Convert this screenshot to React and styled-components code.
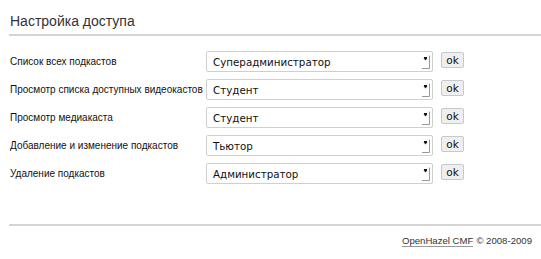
import React from "react";
import styled, { createGlobalStyle } from "styled-components";

const GlobalStyle = createGlobalStyle`
  html, body {
    margin: 0;
    padding: 0;
    background: #fff;
  }
  body {
    font-family: "Liberation Sans", Arial, sans-serif;
    color: #222;
  }
`;

const Page = styled.div`
  width: 541px;
  height: 259px;
  padding-left: 9px;
  box-sizing: border-box;
  overflow: hidden;
`;

const Title = styled.h1`
  margin: 0;
  padding: 12px 0 0 1px;
  height: 22px;
  font-size: 14px;
  font-weight: normal;
  line-height: 18px;
  color: #333;
  border-bottom: 2px solid #d4d4d4;
`;

const Form = styled.div`
  display: grid;
  grid-template-columns: 192px 227px 23px;
  grid-auto-rows: 28px;
  column-gap: 4px;
  padding: 15px 0 0 1px;
  height: 188px;
  box-sizing: border-box;
  align-content: start;
`;

const Label = styled.div`
  font-size: 10px;
  color: #111;
  line-height: 21px;
  white-space: nowrap;
`;

const SelectBox = styled.div`
  display: flex;
  align-items: center;
  height: 21px;
  box-sizing: border-box;
  border: 1px solid #cfcfcf;
  border-radius: 2px;
  padding: 0 2px 0 6px;
  font-family: "DejaVu Sans", sans-serif;
  font-size: 10.3px;
  color: #111;
`;

const SelectText = styled.span`
  flex: 1;
`;

const OkButton = styled.button`
  align-self: start;
  margin: 1px 0 0 4px;
  width: 23px;
  height: 16px;
  padding: 0;
  border: 1px solid #c8c8c8;
  border-radius: 2px;
  background: #efefef;
  font-family: "DejaVu Sans", sans-serif;
  font-size: 10.5px;
  line-height: 13px;
  color: #111;
`;

const Footer = styled.div`
  border-top: 2px solid #d4d4d4;
  display: flex;
  justify-content: flex-end;
  padding: 9px 9px 0 0;
  font-size: 9.6px;
  color: #333;
`;

const FooterLink = styled.a`
  color: #333;
  text-decoration: none;
  border-bottom: 1px solid #999;
  margin-right: 3px;
`;

const Arrow = () => (
  <svg width="9" height="14" viewBox="0 0 9 14">
    <path d="M8.5 0.5 V13.5 H1" stroke="#999" fill="none" />
    <path d="M2.5 3 H6.5 L4.5 5.5 Z" fill="#111" />
    <rect x="3" y="2" width="3" height="1" fill="#111" />
  </svg>
);

const rows = [
  ["Список всех подкастов", "Суперадминистратор"],
  ["Просмотр списка доступных видеокастов", "Студент"],
  ["Просмотр медиакаста", "Студент"],
  ["Добавление и изменение подкастов", "Тьютор"],
  ["Удаление подкастов", "Администратор"],
];

const App = () => {
  return (
    <Page>
      <GlobalStyle />
      <Title>Настройка доступа</Title>
      <Form>
        {rows.map(([label, role]) => (
          <React.Fragment key={label}>
            <Label>{label}</Label>
            <SelectBox>
              <SelectText>{role}</SelectText>
              <Arrow />
            </SelectBox>
            <OkButton>ok</OkButton>
          </React.Fragment>
        ))}
      </Form>
      <Footer>
        <span>
          <FooterLink href="#">OpenHazel CMF</FooterLink>© 2008-2009
        </span>
      </Footer>
    </Page>
  );
};

export default App;
